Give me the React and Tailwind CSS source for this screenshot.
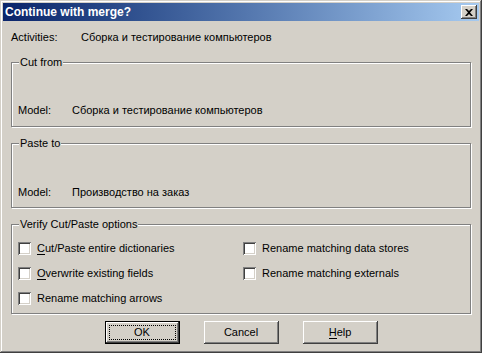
import React from "react";

const raised =
  "shadow-[inset_-1px_-1px_#404040,inset_1px_1px_#ffffff,inset_-2px_-2px_#808080,inset_2px_2px_#d4d0c8]";

function Mnemonic({ children }) {
  return (
    <span className="relative inline-block">
      {children}
      <span className="absolute left-0 right-0 bottom-[0px] h-px bg-black" />
    </span>
  );
}

function GroupBox({ label, className, children }) {
  return (
    <div
      className={
        "relative border border-[#808080] shadow-[inset_1px_1px_#ffffff,1px_1px_#ffffff] " +
        className
      }
    >
      <span className="absolute left-[7px] -top-[7px] h-[13px] bg-[#d4d0c8] px-[1px] leading-[13px]">
        {label}
      </span>
      {children}
    </div>
  );
}

function Checkbox({ children }) {
  return (
    <div className="flex items-center h-[13px]">
      <span className="w-[13px] h-[13px] bg-white shadow-[inset_1px_1px_#808080,inset_-1px_-1px_#ffffff,inset_2px_2px_#404040,inset_-2px_-2px_#d4d0c8]" />
      <span className="ml-[6px] leading-[13px]">{children}</span>
    </div>
  );
}

function Button({ children, isDefault }) {
  if (isDefault) {
    return (
      <div className="w-[75px] h-[23px] border border-black bg-[#d4d0c8]">
        <div className={"w-full h-full p-[3px] " + raised}>
          <div className="w-full h-full flex items-center justify-center border border-dotted border-black">
            {children}
          </div>
        </div>
      </div>
    );
  }
  return (
    <div className={"w-[75px] h-[23px] flex items-center justify-center bg-[#d4d0c8] " + raised}>
      {children}
    </div>
  );
}

export default function App() {
  return (
    <div
      className="w-[482px] h-[353px] p-[3px] flex flex-col bg-[#d4d0c8] text-black text-[11px] shadow-[inset_-1px_-1px_#404040,inset_1px_1px_#d4d0c8,inset_-2px_-2px_#808080,inset_2px_2px_#ffffff]"
      style={{ fontFamily: '"Liberation Sans", Arial, sans-serif' }}
    >
      {/* Title bar */}
      <div className="h-[18px] flex items-center justify-between bg-gradient-to-r from-[#0a246a] to-[#a6caf0] pl-[2px] pr-[2px]">
        <span className="text-white font-bold text-[12px] leading-[14px]">Continue with merge?</span>
        <div className={"w-[16px] h-[14px] flex items-center justify-center bg-[#d4d0c8] " + raised}>
          <svg width="8" height="7" viewBox="0 0 8 7">
            <path d="M0 0h2l2 2 2-2h2L5 3.5 8 7H6L4 5 2 7H0l3-3.5z" fill="#000" />
          </svg>
        </div>
      </div>

      {/* Body */}
      <div className="px-[8px]">
        <div className="mt-[10px] flex h-[13px] leading-[13px]">
          <span className="w-[70px]">Activities:</span>
          <span>Сборка и тестирование компьютеров</span>
        </div>

        <GroupBox label="Cut from" className="mt-[18px] h-[65px]">
          <div className="pt-[41px] pl-[6px] flex leading-[13px]">
            <span className="w-[54px]">Model:</span>
            <span>Сборка и тестирование компьютеров</span>
          </div>
        </GroupBox>

        <GroupBox label="Paste to" className="mt-[16px] h-[65px]">
          <div className="pt-[42px] pl-[6px] flex leading-[13px]">
            <span className="w-[54px]">Model:</span>
            <span>Производство на заказ</span>
          </div>
        </GroupBox>

        <GroupBox label="Verify Cut/Paste options" className="mt-[16px] h-[90px]">
          <div className="pt-[17px] pl-[6px] grid grid-cols-[225px_1fr] gap-y-[12px]">
            <Checkbox>
              <Mnemonic>C</Mnemonic>ut/Paste entire dictionaries
            </Checkbox>
            <Checkbox>Rename matching data stores</Checkbox>
            <Checkbox>
              <Mnemonic>O</Mnemonic>verwrite existing fields
            </Checkbox>
            <Checkbox>Rename matching externals</Checkbox>
            <Checkbox>Rename matching arrows</Checkbox>
          </div>
        </GroupBox>

        <div className="mt-[7px] flex justify-center gap-[24px] leading-[13px]">
          <Button isDefault>OK</Button>
          <Button>Cancel</Button>
          <Button>
            <span>
              <Mnemonic>H</Mnemonic>elp
            </span>
          </Button>
        </div>
      </div>
    </div>
  );
}
